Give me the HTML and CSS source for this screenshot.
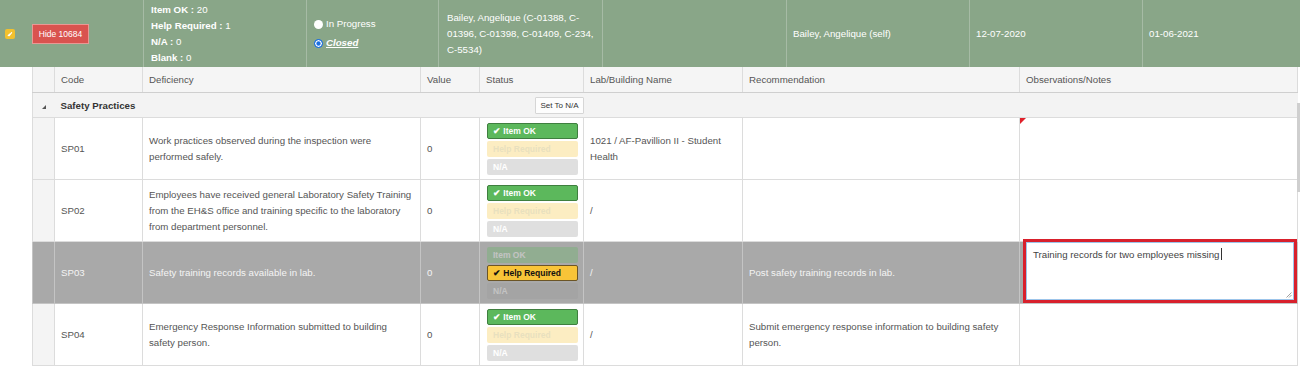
FILE: index.html
```html
<!DOCTYPE html>
<html lang="en">
<head>
    <meta charset="UTF-8">
    <meta name="viewport" content="width=device-width, initial-scale=1.0">
    <title>Inspection 10684</title>
    <link rel="stylesheet" href="styles.css">
</head>
<body>
    <div class="topbar">
        <div class="tb-cell tb-actions">
            <span class="flag">
                <svg width="10" height="10" viewBox="0 0 10 10"><path d="M3.2 6.6 L4.6 5.2 M4.2 6.6 L6.6 3.6" stroke="#fff" stroke-width="1.2" fill="none" stroke-linecap="round"/></svg>
            </span>
            <button class="btn-hide">Hide 10684</button>
        </div>
        <div class="tb-cell tb-stats">
            <div><b>Item OK :</b> 20</div>
            <div><b>Help Required :</b> 1</div>
            <div><b>N/A :</b> 0</div>
            <div><b>Blank :</b> 0</div>
        </div>
        <div class="tb-cell tb-state">
            <label class="radio"><span class="dot"></span>In Progress</label>
            <label class="radio on"><span class="dot"></span><em>Closed</em></label>
        </div>
        <div class="tb-cell tb-owner">Bailey, Angelique (C-01388, C-01396, C-01398, C-01409, C-234, C-5534)</div>
        <div class="tb-cell tb-empty"></div>
        <div class="tb-cell tb-inspector">Bailey, Angelique (self)</div>
        <div class="tb-cell tb-date">12-07-2020</div>
        <div class="tb-cell tb-date2">01-06-2021</div>
    </div>

    <div class="grid-wrap">
        <table class="grid">
            <colgroup>
                <col style="width:22px">
                <col style="width:88px">
                <col style="width:278px">
                <col style="width:59px">
                <col style="width:104px">
                <col style="width:159px">
                <col style="width:277px">
                <col style="width:278px">
            </colgroup>
            <thead>
                <tr>
                    <th class="c-exp"></th>
                    <th>Code</th>
                    <th>Deficiency</th>
                    <th>Value</th>
                    <th>Status</th>
                    <th>Lab/Building Name</th>
                    <th>Recommendation</th>
                    <th>Observations/Notes</th>
                </tr>
            </thead>
            <tbody>
                <tr class="group">
                    <td class="c-exp"><span class="tri"></span></td>
                    <td colspan="4">
                        <div class="group-in">
                            <b>Safety Practices</b>
                            <button class="btn-na">Set To N/A</button>
                        </div>
                    </td>
                    <td colspan="3"></td>
                </tr>
                <tr>
                    <td class="c-exp"></td>
                    <td>SP01</td>
                    <td>Work practices observed during the inspection were performed safely.</td>
                    <td>0</td>
                    <td class="c-status">
                        <div class="st ok">&#10004; Item OK</div>
                        <div class="st help off">Help Required</div>
                        <div class="st na off">N/A</div>
                    </td>
                    <td>1021 / AF-Pavillion II - Student Health</td>
                    <td></td>
                    <td class="c-notes dirty"></td>
                </tr>
                <tr>
                    <td class="c-exp"></td>
                    <td>SP02</td>
                    <td>Employees have received general Laboratory Safety Training from the EH&amp;S office and training specific to the laboratory from department personnel.</td>
                    <td>0</td>
                    <td class="c-status">
                        <div class="st ok">&#10004; Item OK</div>
                        <div class="st help off">Help Required</div>
                        <div class="st na off">N/A</div>
                    </td>
                    <td>/</td>
                    <td></td>
                    <td class="c-notes"></td>
                </tr>
                <tr class="sel">
                    <td class="c-exp"></td>
                    <td>SP03</td>
                    <td>Safety training records available in lab.</td>
                    <td>0</td>
                    <td class="c-status">
                        <div class="st ok off">Item OK</div>
                        <div class="st help">&#10004; Help Required</div>
                        <div class="st na off">N/A</div>
                    </td>
                    <td>/</td>
                    <td>Post safety training records in lab.</td>
                    <td class="c-notes editing">
                        <div class="note-edit">Training records for two employees missing<span class="caret"></span>
                            <svg class="grip" width="6" height="6" viewBox="0 0 6 6"><path d="M5.5 0.5 L0.5 5.5 M5.5 3 L3 5.5" stroke="#888" stroke-width="0.8"/></svg>
                        </div>
                    </td>
                </tr>
                <tr>
                    <td class="c-exp"></td>
                    <td>SP04</td>
                    <td>Emergency Response Information submitted to building safety person.</td>
                    <td>0</td>
                    <td class="c-status">
                        <div class="st ok">&#10004; Item OK</div>
                        <div class="st help off">Help Required</div>
                        <div class="st na off">N/A</div>
                    </td>
                    <td>/</td>
                    <td>Submit emergency response information to building safety person.</td>
                    <td class="c-notes"></td>
                </tr>
            </tbody>
        </table>
        <div class="scroll-thumb"></div>
    </div>
</body>
</html>
```

FILE: styles.css
```css
body {
    margin: 0;
    font-family: "Liberation Sans", Arial, sans-serif;
    font-size: 9.7px;
    color: #555;
    background: #fff;
    overflow: hidden;
}

/* top summary bar */
.topbar {
    display: flex;
    height: 67px;
    background-color: #89a688;
    color: #fff;
    line-height: 16px;
}
.tb-cell {
    display: flex;
    flex-direction: column;
    justify-content: center;
    box-sizing: border-box;
    border-left: 1px solid #a6bba5;
    padding: 0 7px;
}
.tb-actions {
    flex-direction: row;
    align-items: center;
    justify-content: flex-start;
    width: 143px;
    border-left: none;
    padding: 0 0 0 5px;
    gap: 17px;
}
.tb-stats { width: 163px; padding-top: 1px; }
.tb-state { width: 132px; }
.tb-owner { width: 164px; padding: 0 4px 0 8px; }
.tb-empty { width: 184px; }
.tb-inspector { width: 183px; padding-left: 6px; }
.tb-date { width: 173px; padding-left: 6px; }
.tb-date2 { width: 158px; padding-left: 6px; }

.flag {
    display: inline-flex;
    width: 10px;
    height: 10px;
    background-color: #f2c12e;
    border-radius: 2px;
}
.btn-hide {
    width: 57px;
    height: 20px;
    padding: 0;
    background-color: #d9534f;
    border: 1px solid #e99894;
    color: #fff;
    font-family: inherit;
    font-size: 8.5px;
}

.radio {
    display: flex;
    align-items: center;
    height: 19px;
}
.radio .dot {
    width: 9px;
    height: 9px;
    border-radius: 50%;
    background: #fff;
    margin-right: 3px;
    box-sizing: border-box;
}
.radio.on .dot {
    background: #1a6fe0;
    border: 1px solid #1a6fe0;
    box-shadow: inset 0 0 0 1.3px #fff;
}
.radio em {
    font-weight: bold;
    text-decoration: underline;
}

/* grid */
.grid-wrap {
    position: relative;
    padding-left: 32px;
}
.grid {
    width: 1265px;
    table-layout: fixed;
    border-collapse: collapse;
    border-left: 1px solid #ddd;
    line-height: 16px;
}
.grid th {
    background-color: #f5f5f5;
    font-weight: normal;
    text-align: left;
    padding: 5px 6px 4px 6px;
    border: 1px solid #dcdcdc;
    border-top: none;
    border-bottom: 1px solid #cfcfcf;
    color: #555;
}
.grid td {
    padding: 0 7px 0 6px;
    border: 1px solid #dcdcdc;
    vertical-align: middle;
    height: 61px;
    box-sizing: border-box;
}
.grid td.c-exp,
.grid th.c-exp {
    background-color: #f4f4f4;
    padding: 0;
}

.grid tr.group td {
    height: 25px;
    background-color: #f3f3f3;
    border-left: none;
    border-right: none;
    color: #333;
    padding: 1px 6px 0;
}
.grid tr.group td.c-exp {
    border-left: 1px solid #ddd;
    text-align: center;
}
.grid tr.group td[colspan="4"] { padding-right: 0; }
.tri {
    display: inline-block;
    width: 0;
    height: 0;
    border-left: 4px solid transparent;
    border-bottom: 4px solid #555;
}
.group-in {
    display: flex;
    justify-content: space-between;
    align-items: center;
}
.btn-na {
    height: 17px;
    padding: 0 4px;
    background: #fdfdfd;
    border: 1px solid #d6d6d6;
    border-radius: 1px;
    color: #333;
    font-family: inherit;
    font-size: 8px;
}

/* status buttons */
.grid td.c-status {
    padding: 5px 5px 4px 7px;
}
.st {
    height: 16px;
    line-height: 14px;
    box-sizing: border-box;
    margin-bottom: 2px;
    padding: 0 5px;
    border: 1px solid transparent;
    border-radius: 2px;
    font-size: 8.5px;
    font-weight: bold;
}
.st:last-child { margin-bottom: 0; }
.st.ok {
    background-color: #5cb85c;
    border-color: #3f7f3f;
    color: #fff;
}
.st.help {
    background-color: #f8c438;
    border-color: #6b5526;
    color: #111;
}
.st.na {
    background-color: #999;
    color: #fff;
}
.st.off {
    opacity: 0.3;
    border-color: transparent;
}
.st.help.off { color: #b49a2a; }

/* selected row */
.grid tr.sel td,
.grid tr.sel td.c-exp {
    background-color: #a9a9a9;
    color: #f4f4f4;
    border-color: #c4c4c4;
}

/* notes */
.grid td.c-notes { position: relative; }
.grid td.dirty::before {
    content: "";
    position: absolute;
    left: 0;
    top: 0;
    border-top: 6px solid #e0202a;
    border-right: 6px solid transparent;
}
.grid td.editing {
    vertical-align: top;
    padding: 0 3px 3px 6px;
}
.note-edit {
    position: relative;
    height: 58px;
    box-sizing: border-box;
    background: #fff;
    border: 1px solid #9cc4ea;
    outline: 3px solid #d8202c;
    padding: 4px 6px;
    color: #444;
    line-height: 16px;
}
.caret {
    display: inline-block;
    width: 1px;
    height: 12px;
    background: #333;
    margin-left: 2px;
    vertical-align: -2px;
}
.grip {
    position: absolute;
    right: 1px;
    bottom: 1px;
}

.scroll-thumb {
    position: absolute;
    right: 0;
    top: 36px;
    width: 3px;
    height: 89px;
    background-color: #cfcfcf;
}
```
